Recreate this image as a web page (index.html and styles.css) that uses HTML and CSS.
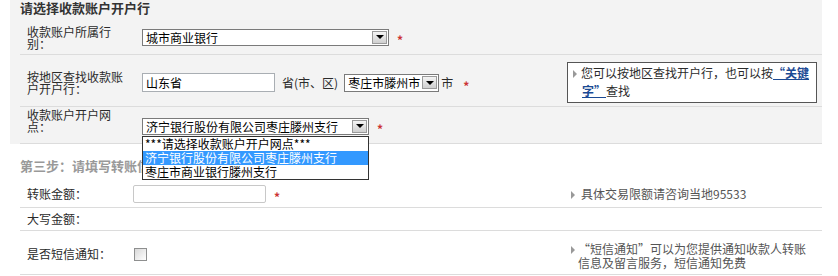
FILE: index.html
```html
<!DOCTYPE html>
<html lang="zh-CN">
<head>
  <meta charset="UTF-8">
  <title>转账汇款</title>
  <link rel="stylesheet" href="styles.css">
</head>
<body>
  <div class="wrap">
    <div class="panel">
      <div class="panel-title">请选择收款账户开户行</div>

      <div class="row row-bank">
        <div class="label">收款账户所属行别：</div>
        <div class="field field-bank">
          <span class="select select-bank"><span class="select-value">城市商业银行</span><span class="select-btn"><i></i></span></span>
          <span class="req">*</span>
        </div>
      </div>

      <div class="row row-area">
        <div class="label">按地区查找收款账户开户行：</div>
        <div class="field">
          <input type="text" class="text" value="山东省">
          <span class="unit">省(市、区)</span>
          <span class="select select-city"><span class="select-value">枣庄市滕州市</span><span class="select-btn"><i></i></span></span>
          <span class="unit unit-city">市</span>
          <span class="req">*</span>
        </div>
        <div class="tip">
          <div class="tip-box"><span class="arrow"></span>您可以按地区查找开户行，也可以按<a href="#">“关键字”</a>查找</div>
        </div>
      </div>

      <div class="row row-branch">
        <div class="label">收款账户开户网点：</div>
        <div class="field field-branch">
          <span class="select-wrap">
            <span class="select select-branch"><span class="select-value">济宁银行股份有限公司枣庄滕州支行</span><span class="select-btn"><i></i></span></span>
            <ul class="dropdown">
              <li>***请选择收款账户开户网点***</li>
              <li class="active">济宁银行股份有限公司枣庄滕州支行</li>
              <li>枣庄市商业银行滕州支行</li>
            </ul>
          </span>
          <span class="req">*</span>
        </div>
      </div>
    </div>

    <div class="step-title">第三步：请填写转账信息</div>

    <div class="row row-amount">
      <div class="label label-s">转账金额：</div>
      <div class="field">
        <input type="text" class="text text-amount">
        <span class="req">*</span>
      </div>
      <div class="tip tip-plain"><span class="arrow arrow-gap"></span>具体交易限额请咨询当地95533</div>
    </div>

    <div class="row row-upper">
      <div class="label label-s">大写金额：</div>
      <div class="field"></div>
      <div class="tip"></div>
    </div>

    <div class="row row-sms">
      <div class="label label-s">是否短信通知：</div>
      <div class="field">
        <input type="checkbox" class="check">
      </div>
      <div class="tip tip-plain tip-sms"><span class="arrow"></span>“短信通知”可以为您提供通知收款人转账信息及留言服务，短信通知免费</div>
    </div>
  </div>
</body>
</html>
```

FILE: styles.css
```css
body {
  margin: 0;
  background: #fff;
  font-family: "Noto Sans CJK SC", "Liberation Sans", sans-serif;
  font-size: 12px;
  color: #2b2b2b;
}
.wrap {
  width: 812px;
  margin-left: 10px;
}
.panel {
  background: #f3f3f3;
}
.panel-title {
  height: 16px;
  padding-left: 10px;
  font-size: 13px;
  font-weight: bold;
  line-height: 16px;
  color: #333;
}
.row {
  display: flex;
  align-items: flex-start;
  margin-left: 10px;
  border-bottom: 1px solid #dcdcdc;
  box-sizing: border-box;
}
.label {
  flex-shrink: 0;
  width: 122px;
  padding: 0 15px 0 7px;
  box-sizing: border-box;
  line-height: 12px;
}
.label-s {
  width: 113px;
  padding-right: 6px;
}
.field {
  flex: 1;
  display: flex;
  align-items: center;
}
.tip {
  flex-shrink: 0;
  width: 255px;
}

/* rows of the gray panel */
.row-bank {
  height: 39px;
  padding-top: 10px;
}
.field-bank {
  margin-top: 2px;
}
.row-area {
  height: 52px;
  padding-top: 4px;
  align-items: center;
}
.row-branch {
  height: 37px;
  padding-top: 2px;
}
.field-branch {
  margin-top: 8px;
}

/* fake selects */
.select {
  display: inline-flex;
  align-items: center;
  height: 17px;
  padding: 1px;
  border: 1px solid #7a7a7a;
  background: #fff;
  box-sizing: border-box;
}
.select-value {
  flex: 1;
  padding-left: 2px;
  line-height: 13px;
  white-space: nowrap;
  color: #000;
}
.select-btn {
  display: flex;
  align-items: center;
  justify-content: center;
  width: 15px;
  height: 13px;
  border: 1px solid #9a9a9a;
  background: linear-gradient(#f4f4f4, #cfcfcf);
  box-sizing: border-box;
}
.select-btn i {
  width: 0;
  height: 0;
  border-left: 4px solid transparent;
  border-right: 4px solid transparent;
  border-top: 4px solid #000;
}
.select-bank {
  width: 247px;
}
.select-city {
  width: 95px;
  height: 18px;
  margin-left: 6px;
}
.select-branch {
  width: 227px;
}
.select-wrap {
  position: relative;
  display: inline-flex;
}
.dropdown {
  position: absolute;
  left: 0;
  top: 18px;
  z-index: 2;
  width: 227px;
  margin: 0;
  padding: 0;
  list-style: none;
  border: 1px solid #333;
  background: #fff;
  box-sizing: border-box;
}
.dropdown li {
  padding-left: 2px;
  line-height: 14px;
  white-space: nowrap;
  color: #000;
}
.dropdown li.active {
  background: #3399ff;
  color: #fff;
}

.text {
  width: 133px;
  height: 19px;
  margin: 0;
  padding: 0 3px;
  border: 1px solid #a9aeb3;
  font: inherit;
  color: #000;
  background: #fff;
  box-sizing: border-box;
}
.unit {
  margin-left: 7px;
}
.unit-city {
  margin-left: 2px;
}
.req {
  margin: 6px 0 0 8px;
  font-weight: bold;
  line-height: 12px;
  color: #cc3333;
}
.unit-city + .req {
  margin-left: 10px;
}

.tip-box {
  width: 250px;
  height: 41px;
  padding: 1px 3px 1px 14px;
  border: 1px solid #555;
  background: #fff;
  line-height: 18px;
  box-sizing: border-box;
}
.tip-box a {
  color: #1b4a94;
  font-weight: bold;
}
.arrow {
  display: inline-block;
  width: 0;
  height: 0;
  margin: 0 4px 0 -9px;
  border-top: 4px solid transparent;
  border-bottom: 4px solid transparent;
  border-left: 4px solid #999;
}
.tip-plain {
  padding-left: 11px;
  box-sizing: border-box;
  line-height: 14px;
  color: #555;
}
.tip-plain .arrow {
  margin: 0 3px 0 -7px;
}
.tip-plain .arrow-gap {
  margin-right: 6px;
}
.tip-sms {
  margin-top: 4px;
  padding-right: 12px;
}

/* rows of step three */
.step-title {
  height: 17px;
  margin: 14px 0 0 10px;
  font-size: 13px;
  font-weight: bold;
  line-height: 16px;
  color: #999;
}
.row-amount {
  height: 33px;
  padding-top: 6px;
  align-items: center;
}
.text-amount {
  height: 18px;
  border-color: #c8c8c8;
  border-radius: 2px;
}
.row-upper {
  height: 23px;
  align-items: center;
}
.row-sms {
  height: 44px;
  padding-top: 3px;
  align-items: center;
}
.check {
  appearance: none;
  width: 13px;
  height: 13px;
  margin: 0 0 0 1px;
  border: 1px solid #8e8f8f;
  background: linear-gradient(135deg, #d8d8d8, #fff);
  box-sizing: border-box;
}
```
